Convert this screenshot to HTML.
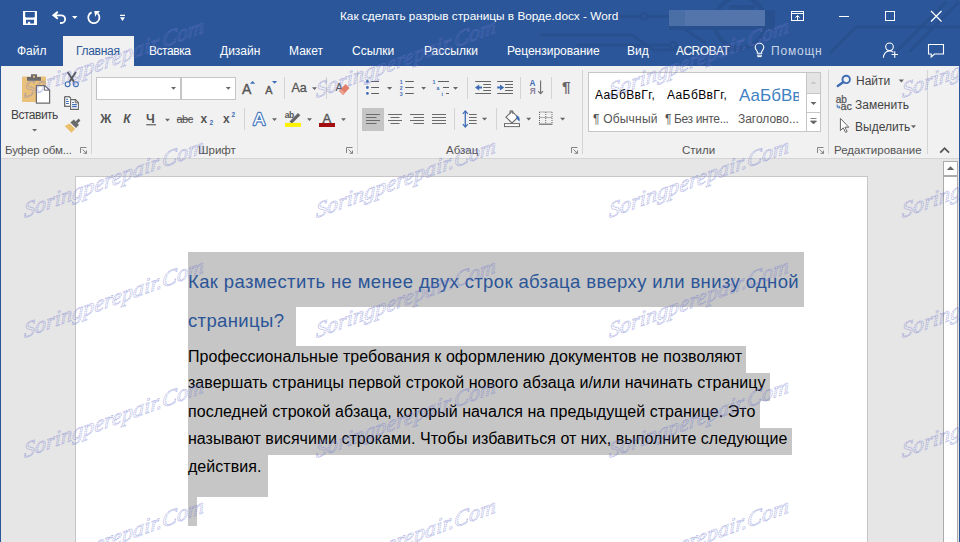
<!DOCTYPE html>
<html><head><meta charset="utf-8">
<style>
*{margin:0;padding:0;box-sizing:border-box}
html,body{width:960px;height:542px;overflow:hidden;background:#E6E6E6;font-family:"Liberation Sans",sans-serif}
.a{position:absolute}
.t{position:absolute;white-space:nowrap;line-height:1}
#title{left:0;top:0;width:960px;height:66px;background:#2B579A}
#ribbon{left:0;top:66px;width:960px;height:93px;background:#F1F1F1;border-bottom:1px solid #D5D5D5}
.tab{position:absolute;top:45px;color:#fff;font-size:12px;line-height:1}
.sep{position:absolute;width:1px;background:#D4D4D4}
.glab{position:absolute;top:145px;font-size:11.5px;color:#555;line-height:1;white-space:nowrap}
.btxt{position:absolute;font-size:16px;color:#000;line-height:1;white-space:nowrap;letter-spacing:0.035px}
.hl{position:absolute;background:#C6C6C6}
</style></head><body>
<div id="title" class="a"></div>
<!-- title bar pattern -->
<svg class="a" style="left:0;top:0" width="960" height="66">
 <g stroke="#28508F" stroke-width="3" fill="none">
  <path d="M590 16.2 H640 M648.4 16.2 H669"/>
  <circle cx="644.2" cy="16.2" r="3.3" stroke-width="2.5"/>
  <path d="M540 35 H632 L654 50 H740"/>
  <path d="M577 45 H669"/>
  <circle cx="673.2" cy="45.2" r="3.3" stroke-width="2.5"/>
  <path d="M684 29 L706 43"/>
  <circle cx="740" cy="22.5" r="25.5" stroke-width="4"/>
  <path d="M830 53 L856 27 H960"/>
  <path d="M896 52 L946 2"/>
  <path d="M909 52 L959 2"/>
 </g>
 <rect x="669" y="26" width="106" height="4" fill="#28508F"/>
 <rect x="765" y="10" width="10" height="16" fill="#28508F"/>
 <rect x="729" y="5" width="26" height="4.5" fill="#28508F"/>
</svg>
<div id="ribbon" class="a"></div>
<!-- active tab -->
<div class="a" style="left:63px;top:36px;width:71px;height:31px;background:#F1F1F1"></div>
<div class="tab" style="left:17px">Файл</div>
<div class="tab" style="left:76px;color:#2B579A;letter-spacing:-0.3px">Главная</div>
<div class="tab" style="left:149px;letter-spacing:-0.45px">Вставка</div>
<div class="tab" style="left:220px">Дизайн</div>
<div class="tab" style="left:289px">Макет</div>
<div class="tab" style="left:352px">Ссылки</div>
<div class="tab" style="left:424px">Рассылки</div>
<div class="tab" style="left:507px">Рецензирование</div>
<div class="tab" style="left:627px">Вид</div>
<div class="tab" style="left:676px;letter-spacing:-0.55px">ACROBAT</div>
<div class="tab" style="left:771px;color:#C9D5E8;letter-spacing:0.8px">Помощн</div>
<div class="t" style="left:340px;top:11px;color:#fff;font-size:11.8px">Как сделать разрыв страницы в Ворде.docx - Word</div>

<div class="a" style="left:669px;top:10px;width:16px;height:16px;background:#4A6EA6"></div>
<div class="a" style="left:685px;top:10px;width:80px;height:16px;background:#5475AB"></div>
<!-- QAT icons -->
<svg class="a" style="left:0;top:0" width="140" height="32">
 <path fill="#fff" fill-rule="evenodd" d="M23 11H37V25H23Z M25.2 12.1H34.8V16.8L34 17.6H26L25.2 16.8Z M26 19.8H34V23.5H30.1V21.8H27.9V23.5H26Z"/>
 <path d="M55 15.3 H61.3 A3.85 3.85 0 0 1 61.3 23 H60" stroke="#fff" stroke-width="1.8" fill="none"/>
 <path d="M51.9 15.3 L57.2 11 L58.3 12.4 L56 15.3 L58.3 18.2 L57.2 19.6Z" fill="#fff"/>
 <path d="M72 16 H77.5 L74.75 19Z" fill="#fff"/>
 <path d="M91.6 12.4 A5.6 5.6 0 1 0 97.6 13.4" stroke="#fff" stroke-width="1.8" fill="none"/>
 <path d="M94.2 11.1 H100 L98.2 13 L96.4 14.5 L95.3 17 Z" fill="#fff"/>
 <path d="M120 14.8 H125 V16 H120Z M120 17.3 H125 L122.5 21Z" fill="#fff"/>
</svg>
<!-- window controls -->
<svg class="a" style="left:0;top:0" width="960" height="66">
 <g stroke="#fff" stroke-width="1" fill="none">
  <rect x="791.5" y="11.5" width="12" height="9"/>
  <path d="M791.5 13.5 H803.5 M797.5 20.5 V15.5 M795.3 17.7 L797.5 15.5 L799.7 17.7"/>
  <path d="M839 16.5 H849"/>
  <rect x="885.5" y="11.5" width="9" height="9"/>
  <path d="M931 11 L941.5 21.5 M941.5 11 L931 21.5" stroke-width="1.2"/>
  <path d="M757.3 53.2 V51.5 Q755.2 49.2 755.2 47.6 A4.3 4.3 0 0 1 763.8 47.6 Q763.8 49.2 761.7 51.5 V53.2Z" stroke-width="1.1"/>
  <path d="M757 55.2 H762 M757.3 56.6 H761.7" stroke-width="1"/>
  <circle cx="889.5" cy="46.8" r="3.8" stroke-width="1.1"/>
  <path d="M883.3 57.8 Q884 51.5 889.5 50.8 Q892 51 893.4 52.3" stroke-width="1.1"/>
  <path d="M891.5 54.5 H898 M894.75 51.3 V57.8" stroke-width="1.1"/>
  <path d="M928.5 44.5 H943.5 V54 H934.5 L931.2 57 V54 H928.5Z" stroke-width="1.1"/>
 </g>
</svg>



<!-- ===== RIBBON ===== -->
<div class="t" style="left:11px;top:109px;font-size:12px;color:#444;letter-spacing:-0.5px">Вставить</div>
<div class="glab" style="left:5px;letter-spacing:-0.15px">Буфер обм...</div>
<div class="glab" style="left:198px">Шрифт</div>
<div class="glab" style="left:446px">Абзац</div>
<div class="glab" style="left:682px">Стили</div>
<div class="glab" style="left:834px">Редактирование</div>
<div class="t" style="left:856px;top:75px;font-size:12px;color:#444">Найти</div>
<div class="t" style="left:855px;top:99px;font-size:12px;color:#444">Заменить</div>
<div class="t" style="left:855px;top:121px;font-size:12px;color:#444">Выделить</div>
<!-- combos -->
<div class="a" style="left:96px;top:77px;width:85px;height:23px;background:#fff;border:1px solid #C6C6C6"></div>
<div class="a" style="left:181px;top:77px;width:55px;height:23px;background:#fff;border:1px solid #C6C6C6"></div>
<!-- styles gallery -->
<div class="a" style="left:588px;top:72px;width:219px;height:60px;background:#fff;border:1px solid #C6C6C6"></div>
<div class="a" style="left:806px;top:72px;width:15px;height:22px;background:#E4E4E4;border:1px solid #C6C6C6"></div>
<div class="a" style="left:806px;top:93px;width:15px;height:20px;background:#fff;border:1px solid #C6C6C6"></div>
<div class="a" style="left:806px;top:112px;width:15px;height:20px;background:#fff;border:1px solid #C6C6C6"></div>
<div class="t" style="left:595px;top:89px;font-size:12px;color:#000;letter-spacing:0.4px">АаБбВвГг,</div>
<div class="t" style="left:667px;top:89px;font-size:12px;color:#000;letter-spacing:0.4px">АаБбВвГг,</div>
<div class="t" style="left:739px;top:87px;font-size:17px;color:#3F82C2;width:60px;overflow:hidden">АаБбВв</div>
<div class="t" style="left:593px;top:113px;font-size:12px;color:#555;letter-spacing:0.2px">¶ Обычный</div>
<div class="t" style="left:665px;top:113px;font-size:12px;color:#555;letter-spacing:-0.36px">¶ Без инте...</div>
<div class="t" style="left:738px;top:113px;font-size:12px;color:#555;letter-spacing:-0.03px">Заголово...</div>
<!-- align left selected -->
<div class="a" style="left:362px;top:108px;width:22px;height:23px;background:#C5C5C5"></div>
<!-- separators -->
<div class="sep" style="left:91px;top:70px;height:84px"></div>
<div class="sep" style="left:357px;top:70px;height:84px"></div>
<div class="sep" style="left:582px;top:70px;height:84px"></div>
<div class="sep" style="left:828px;top:70px;height:84px"></div>
<div class="sep" style="left:927px;top:70px;height:84px"></div>
<div class="sep" style="left:284px;top:77px;height:22px"></div>
<div class="sep" style="left:326px;top:77px;height:22px"></div>
<div class="sep" style="left:244px;top:108px;height:22px"></div>
<div class="sep" style="left:467px;top:77px;height:22px"></div>
<div class="sep" style="left:520px;top:77px;height:22px"></div>
<div class="sep" style="left:551px;top:77px;height:22px"></div>
<div class="sep" style="left:454px;top:108px;height:22px"></div>
<div class="sep" style="left:496px;top:108px;height:22px"></div>

<!-- ribbon icons -->
<svg class="a" style="left:0;top:0" width="960" height="160" font-family="Liberation Sans">
 <!-- paste -->
 <rect x="22" y="76.5" width="24" height="25.5" rx="1" fill="#EAC17A"/>
 <path d="M27 77 H41 V80.8 H27Z M31 74.2 H37 V77.5 H31Z" fill="#6B6B6B"/>
 <rect x="33" y="75.8" width="2" height="1.8" fill="#EAC17A"/>
 <path d="M36.4 85.6 H44.6 L49.6 90 V103.2 H36.4Z" fill="#fff" stroke="#6B6B6B" stroke-width="1.2"/>
 <path d="M44.4 85.8 V90.2 H49.4" fill="none" stroke="#6B6B6B" stroke-width="1"/>
 <path d="M32 129 H37.2 L34.6 131.6Z" fill="#6B6B6B"/>
 <!-- scissors -->
 <path d="M67.6 72 L74 81.8 M75.9 72 L69.5 81.8" stroke="#555" stroke-width="1.9"/>
 <circle cx="67.6" cy="84.2" r="2.4" fill="none" stroke="#3E6DB5" stroke-width="1.1"/>
 <circle cx="75.9" cy="84.2" r="2.4" fill="none" stroke="#3E6DB5" stroke-width="1.1"/>
 <!-- copy -->
 <path d="M64.7 96.7 H69.2 L71 98.5 M64.7 96.7 V106.3 H70" fill="#fff" stroke="#666" stroke-width="1.1"/>
 <rect x="65.2" y="97.2" width="5" height="8.6" fill="#fff"/>
 <path d="M64.7 96.7 H69.2 L70.8 98.3 M64.7 96.7 V106.3 H70.4" fill="none" stroke="#666" stroke-width="1.1"/>
 <path d="M70.6 99.6 H75.4 L78.4 102.6 V109.4 H70.6Z" fill="#fff" stroke="#666" stroke-width="1.1"/>
 <path d="M75.2 99.8 V102.8 H78.2" fill="none" stroke="#666" stroke-width="1"/>
 <path d="M66 99.3 H68 M66 101.5 H68.8 M66 103.5 H68.8 M72.1 102.5 H73.8 M72.1 104.6 H76.8 M72.1 106.6 H76.8" stroke="#3E6DB5" stroke-width="1.1"/>
 <!-- format painter -->
 <path d="M75.6 121.4 L78.6 118.6 L80.4 120.4 L77.6 123.4Z" fill="#666"/>
 <path d="M70.4 122.6 L73.8 119.6 L79 124.8 L76 128Z" fill="#6A6A6A"/>
 <path d="M69.6 123.4 L75.2 129 L71.4 132.8 L64.6 126Z" fill="#EBC06C"/>
 <!-- combo arrows -->
 <path d="M171 87 H176 L173.5 89.8Z M225.8 87 H230.8 L228.3 89.8Z" fill="#666"/>
 <!-- grow/shrink -->
 <text x="242" y="93.8" font-size="14" fill="#555" stroke="#555" stroke-width="0.4">A</text>
 <path d="M250 83.8 L252.6 81 L255.2 83.8Z" fill="#3E6DB5"/>
 <text x="265.3" y="93.8" font-size="10.8" fill="#555" stroke="#555" stroke-width="0.4">A</text>
 <path d="M272 81 H277.2 L274.6 83.8Z" fill="#3E6DB5"/>
 <text x="291.5" y="92" font-size="12.5" fill="#555" stroke="#555" stroke-width="0.3">Aa</text>
 <path d="M312 87.2 H317 L314.5 90Z" fill="#666"/>
 <!-- clear formatting -->
 <text x="335.5" y="91" font-size="11" fill="#555">A</text>
 <path d="M339 91 L345.5 84 L349.5 88 L343 95 Z" fill="#E27D6A"/>
 <path d="M339 91 L341 89 L345 93 L343 95Z" fill="#E9A090"/>
 <!-- row 2 font -->
 <text x="100.2" y="122.9" font-size="12.3" font-weight="bold" fill="#555">Ж</text>
 <text x="123.2" y="122.9" font-size="12" font-weight="bold" font-style="italic" fill="#555">К</text>
 <text x="146" y="122.9" font-size="12.5" font-weight="bold" fill="#555">Ч</text>
 <rect x="146.2" y="124.2" width="9.8" height="1.1" fill="#555"/>
 <path d="M165 118.8 H170 L167.5 121.4Z" fill="#666"/>
 <text x="176.6" y="122.9" font-size="11" fill="#555" letter-spacing="-0.6">abc</text>
 <rect x="176.8" y="118.8" width="16.4" height="1.1" fill="#555"/>
 <text x="200.6" y="122.9" font-size="12" font-weight="bold" fill="#555">x</text>
 <text x="209.4" y="124.8" font-size="6.5" font-weight="bold" fill="#3E6DB5">2</text>
 <text x="223.1" y="122.9" font-size="12" font-weight="bold" fill="#555">x</text>
 <text x="231.4" y="117.4" font-size="6.5" font-weight="bold" fill="#3E6DB5">2</text>
 <!-- text effects -->
 <text x="253.6" y="124.6" font-size="17" fill="#fff" stroke="#4A79BE" stroke-width="2.4" paint-order="stroke" stroke-linejoin="round">A</text>
 <path d="M272 118.2 H277 L274.5 121Z" fill="#666"/>
 <!-- highlight -->
 <text x="284.8" y="118.2" font-size="8.5" font-weight="bold" fill="#555" letter-spacing="-0.5">ab</text>
 <path d="M289.5 121.5 L298 113 L300.3 115.3 L291.8 123.8Z" fill="#666"/>
 <rect x="285" y="122.9" width="16" height="4" fill="#FFF200"/>
 <path d="M307 118.2 H312 L309.5 121Z" fill="#666"/>
 <!-- font color -->
 <text x="322.6" y="122.5" font-size="13" fill="#555" stroke="#555" stroke-width="0.4">A</text>
 <rect x="319" y="123" width="16" height="4" fill="#A50E0E"/>
 <path d="M341 118.2 H346 L343.5 121Z" fill="#666"/>
 <!-- bullets -->
 <g fill="#3E6DB5"><circle cx="367.4" cy="81.4" r="1.4"/><circle cx="367.4" cy="87.5" r="1.4"/><circle cx="367.4" cy="93.4" r="1.4"/></g>
 <path d="M371.2 81.5 H379 M371.2 87.5 H379 M371.2 93.5 H379" stroke="#5F5F5F" stroke-width="1.1"/>
 <path d="M387 87 H392.2 L389.6 89.8Z M421.2 87 H426 L423.6 89.8Z M453 87 H458 L455.5 89.8Z" fill="#666"/>
 <g fill="#3E6DB5" font-size="5.2" font-weight="bold">
  <text x="399.8" y="83.6">1</text><text x="399.8" y="89.6">2</text><text x="399.8" y="95.6">3</text>
  <text x="432.6" y="83.6">1</text><text x="436.6" y="89.6">a</text><text x="441.4" y="95.6">i</text>
 </g>
 <path d="M405.2 81.5 H413.8 M405.2 87.5 H413.8 M405.2 93.5 H413.8 M438 81.5 H449 M443 87.5 H449 M446 93.5 H449" stroke="#5F5F5F" stroke-width="1.1"/>
 <!-- indent -->
 <path d="M475.2 81.5 H491 M483.2 84.5 H491 M483.2 87.5 H491 M483.2 90.5 H491 M475.2 93.5 H491" stroke="#666" stroke-width="1.1"/>
 <path d="M497.2 81.5 H513 M505 84.5 H513 M505 87.5 H513 M505 90.5 H513 M497.2 93.5 H513" stroke="#666" stroke-width="1.1"/>
 <path d="M482 87.5 H478" stroke="#3E6DB5" stroke-width="2"/>
 <path d="M475 87.5 L479.2 84.4 V90.6Z" fill="#3E6DB5"/>
 <path d="M497.2 87.5 H501.2" stroke="#3E6DB5" stroke-width="2"/>
 <path d="M504.2 87.5 L500 84.4 V90.6Z" fill="#3E6DB5"/>
 <!-- sort -->
 <text x="529.4" y="86.4" font-size="8.2" font-weight="bold" fill="#3E6DB5">A</text>
 <text x="529.8" y="94.4" font-size="8.2" font-weight="bold" fill="#8A7F9A">Я</text>
 <path d="M540.6 80.4 V93.6 M538.2 91.2 L540.6 93.8 L543 91.2" stroke="#6B6B6B" stroke-width="1.1" fill="none"/>
 <!-- pilcrow -->
 <text x="562" y="92" font-size="15.5" font-weight="bold" fill="#666">¶</text>
 <!-- align -->
 <g stroke="#6B6B6B" stroke-width="1.1">
  <path d="M366 114.5 H380 M366 117.5 H376.5 M366 120.5 H380 M366 123.5 H376.5"/>
  <path d="M388 114.5 H402 M390.5 117.5 H399.5 M388 120.5 H402 M390.5 123.5 H399.5"/>
  <path d="M410 114.5 H424 M413.5 117.5 H424 M410 120.5 H424 M413.5 123.5 H424"/>
  <path d="M432 114.5 H446 M432 117.5 H446 M432 120.5 H446 M432 123.5 H446"/>
  <path d="M469 114.5 H476.7 M469 117.5 H476.7 M469 120.5 H476.7 M469 123.5 H476.7"/>
 </g>
 <!-- line spacing arrows -->
 <path d="M465.3 111.5 V126.5" stroke="#3E6DB5" stroke-width="1.3"/>
 <path d="M462.9 113.8 L465.3 110.9 L467.8 113.8 M462.9 124.2 L465.3 127.1 L467.8 124.2" stroke="#3E6DB5" stroke-width="1.3" fill="none"/>
 <path d="M481.9 117.8 H487.2 L484.55 120.6Z M526.2 117.8 H531.2 L528.7 120.6Z M560 117.8 H565.2 L562.6 120.6Z" fill="#666"/>
 <!-- shading -->
 <path d="M506 117.2 L512 111.4 L518 117.2 L512 123Z" fill="#fff" stroke="#6B6B6B" stroke-width="1.1"/>
 <path d="M510 114 V110.9 H512.8 V114" fill="none" stroke="#6B6B6B" stroke-width="1"/>
 <path d="M516 115.6 Q520.5 116 519.5 121.5 Q517.5 120 516.5 118Z" fill="#3E6DB5"/>
 <rect x="504.5" y="123.6" width="15" height="3" fill="#fff" stroke="#6B6B6B" stroke-width="1"/>
 <!-- borders -->
 <g fill="none" stroke="#6B6B6B" stroke-width="1" stroke-dasharray="1 1">
  <path d="M539.5 112 H552 M539.5 117.5 H552 M539.5 112 V123 M545.75 112 V123 M552 112 V123"/>
 </g>
 <path d="M539 124.2 H552.5" stroke="#6B6B6B" stroke-width="1.2"/>
 <!-- dialog launchers -->
 <g fill="none" stroke="#777" stroke-width="0.9">
  <path d="M80.5 153 V147.5 H86.5 M82.5 149.5 L86.5 153.3 M86.5 150.5 V153.3 H83.5"/>
  <path d="M346.5 153 V147.5 H352.5 M348.5 149.5 L352.5 153.3 M352.5 150.5 V153.3 H349.5"/>
  <path d="M571.5 153 V147.5 H577.5 M573.5 149.5 L577.5 153.3 M577.5 150.5 V153.3 H574.5"/>
  <path d="M817.5 153 V147.5 H823.5 M819.5 149.5 L823.5 153.3 M823.5 150.5 V153.3 H820.5"/>
 </g>
 <!-- styles scroll -->
 <path d="M810.5 84 L813.5 81 L816.5 84Z" fill="#C8C8C8"/>
 <path d="M810.5 102 H816.5 L813.5 105Z" fill="#666"/>
 <path d="M810.5 118.5 H816.5 M810.5 121 H816.5 L813.5 124Z" fill="#666" stroke="#666" stroke-width="0.8"/>
 <!-- find -->
 <circle cx="846.2" cy="79.4" r="3.7" fill="none" stroke="#3E6DB5" stroke-width="1.9"/>
 <path d="M843.4 82 L837.8 86" stroke="#3E6DB5" stroke-width="2.4" stroke-linecap="round"/>
 <path d="M898.7 79.4 H904 L901.35 82.4Z" fill="#666"/>
 <!-- replace -->
 <text x="835.8" y="103" font-size="10" fill="#555" stroke="#555" stroke-width="0.25">ab</text>
 <text x="840.4" y="109.8" font-size="10.8" fill="#555" stroke="#555" stroke-width="0.25">ac</text>
 <path d="M837.2 104.5 V107.2 H839.6" stroke="#3E6DB5" stroke-width="1" fill="none"/>
 <path d="M838.6 105.8 L840.2 107.2 L838.6 108.6" stroke="#3E6DB5" stroke-width="0.9" fill="none"/>
 <!-- select -->
 <path d="M840.4 118.4 V130.6 L843.2 127.8 L845.6 132.4 L847.2 131.6 L844.9 127.2 L848.8 127.2Z" fill="#fff" stroke="#666" stroke-width="1"/>
 <path d="M911 125.2 H916 L913.5 128.2Z" fill="#666"/>
 <!-- collapse -->
 <path d="M940.2 152.6 L944.6 148.2 L949 152.6" stroke="#555" stroke-width="1.8" fill="none"/>
</svg>
<!-- left/right window border -->
<div class="a" style="left:0;top:66px;width:1px;height:476px;background:#2B579A"></div>
<div class="a" style="left:959px;top:66px;width:1px;height:476px;background:#2B579A"></div>

<!-- page -->
<div class="a" style="left:75px;top:176px;width:793px;height:400px;background:#fff;border:1px solid #C6C6C6"></div>
<!-- scrollbar -->
<div class="a" style="left:943px;top:161px;width:15px;height:15px;background:#fff;border:1px solid #ABABAB"></div>
<svg class="a" style="left:943px;top:161px" width="15" height="15"><path d="M3.8 9 L7.5 5.2 L11.2 9Z" fill="#666"/></svg>
<div class="a" style="left:943px;top:176px;width:15px;height:380px;background:#fff;border:1px solid #ABABAB"></div>

<!-- highlights -->
<div class="hl" style="left:188px;top:252px;width:616px;height:55px"></div>
<div class="hl" style="left:188px;top:307px;width:108px;height:39px"></div>
<div class="hl" style="left:188px;top:346px;width:558px;height:27px"></div>
<div class="hl" style="left:188px;top:373px;width:582px;height:28px"></div>
<div class="hl" style="left:188px;top:401px;width:572px;height:28px"></div>
<div class="hl" style="left:188px;top:428px;width:604px;height:27px"></div>
<div class="hl" style="left:188px;top:455px;width:80px;height:42px"></div>
<div class="hl" style="left:188px;top:497px;width:9px;height:29px"></div>

<div class="t" style="left:188px;top:273.3px;font-size:18.5px;letter-spacing:0.37px;color:#2B5597">Как разместить не менее двух строк абзаца вверху или внизу одной</div>
<div class="t" style="left:188px;top:312.3px;font-size:18.5px;letter-spacing:0.37px;color:#2B5597">страницы?</div>
<div class="btxt" style="left:188px;top:348.5px">Профессиональные требования к оформлению документов не позволяют</div>
<div class="btxt" style="left:188px;top:375px">завершать страницы первой строкой нового абзаца и/или начинать страницу</div>
<div class="btxt" style="left:188px;top:404px">последней строкой абзаца, который начался на предыдущей странице. Это</div>
<div class="btxt" style="left:188px;top:430.5px">называют висячими строками. Чтобы избавиться от них, выполните следующие</div>
<div class="btxt" style="left:188px;top:459px">действия.</div>

<!-- watermark -->
<svg class="a" style="left:0;top:0;pointer-events:none" width="960" height="542">
 <defs><text id="wm" x="0" y="0" font-family="Liberation Serif" font-style="italic" font-size="22" textLength="180" lengthAdjust="spacing" fill="none" stroke="rgb(110,118,205)" stroke-opacity="0.45" stroke-width="1" stroke-dasharray="1.4 0.5">Soringperepair.Com</text></defs>
 <use href="#wm" transform="translate(24 98) skewY(-20)"/>
 <use href="#wm" transform="translate(24 218) skewY(-20)"/>
 <use href="#wm" transform="translate(24 338) skewY(-20)"/>
 <use href="#wm" transform="translate(24 458) skewY(-20)"/>
 <use href="#wm" transform="translate(24 578) skewY(-20)"/>
 <use href="#wm" transform="translate(316 98) skewY(-20)"/>
 <use href="#wm" transform="translate(316 218) skewY(-20)"/>
 <use href="#wm" transform="translate(316 338) skewY(-20)"/>
 <use href="#wm" transform="translate(316 458) skewY(-20)"/>
 <use href="#wm" transform="translate(316 578) skewY(-20)"/>
 <use href="#wm" transform="translate(609 98) skewY(-20)"/>
 <use href="#wm" transform="translate(609 218) skewY(-20)"/>
 <use href="#wm" transform="translate(609 338) skewY(-20)"/>
 <use href="#wm" transform="translate(609 458) skewY(-20)"/>
 <use href="#wm" transform="translate(609 578) skewY(-20)"/>
 <use href="#wm" transform="translate(902 98) skewY(-20)"/>
 <use href="#wm" transform="translate(902 218) skewY(-20)"/>
 <use href="#wm" transform="translate(902 338) skewY(-20)"/>
 <use href="#wm" transform="translate(902 458) skewY(-20)"/>
 <use href="#wm" transform="translate(902 578) skewY(-20)"/>
</svg>
</body></html>
